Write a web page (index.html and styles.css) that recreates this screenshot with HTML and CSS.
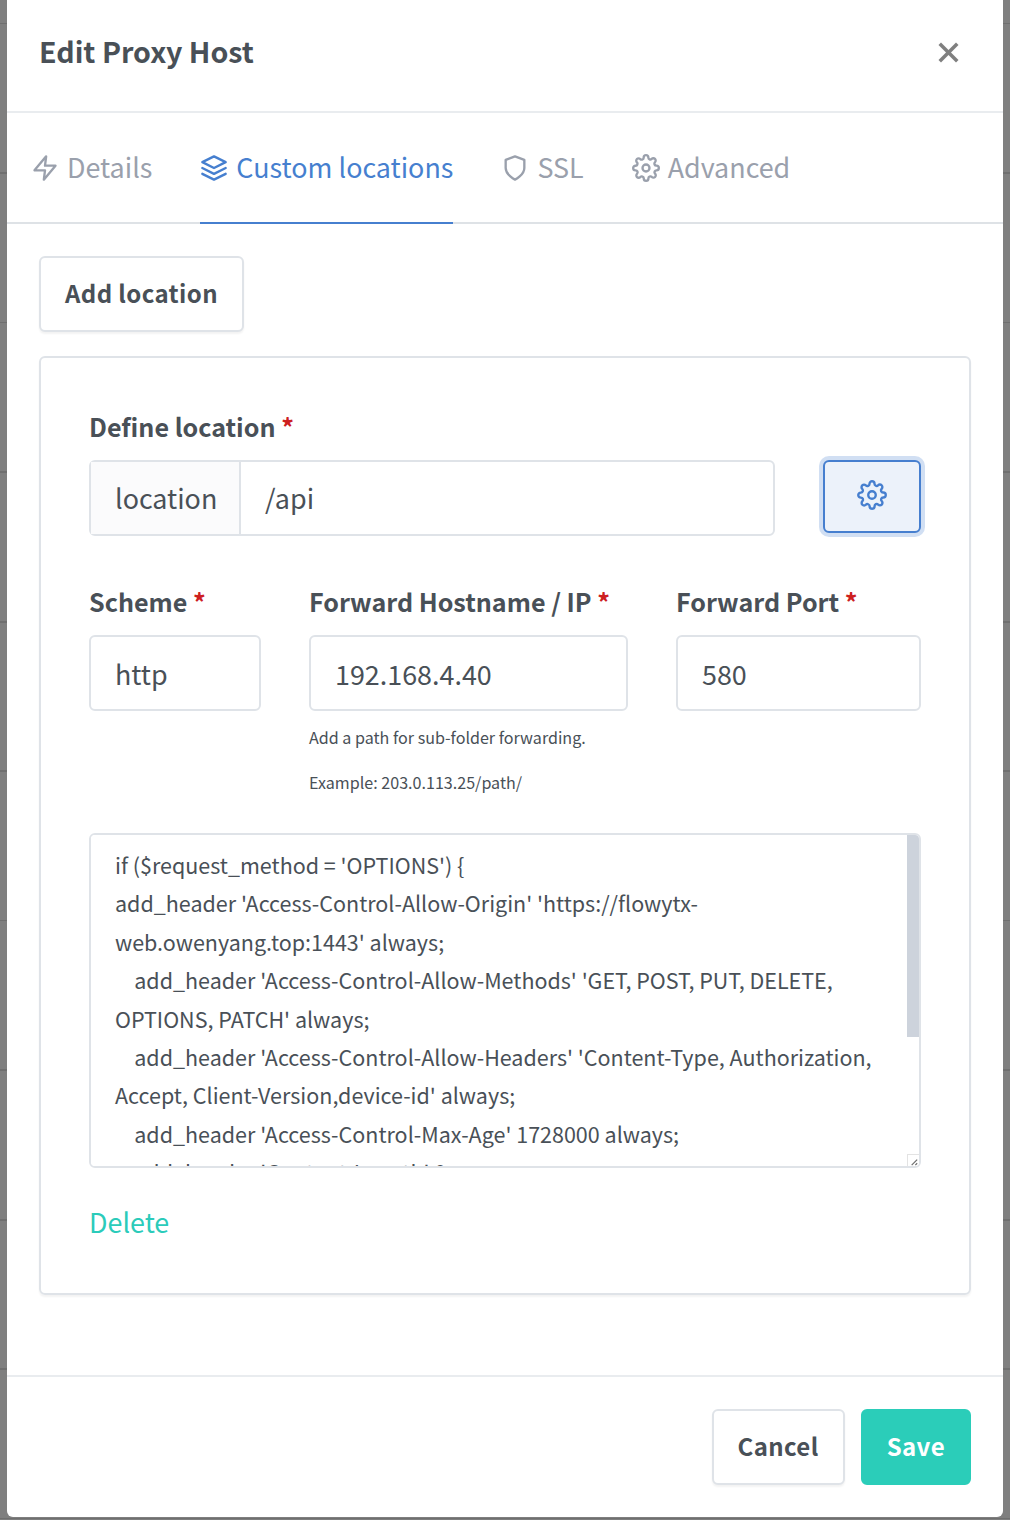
FILE: index.html
```html
<!DOCTYPE html>
<html lang="en">
<head>
    <meta charset="UTF-8">
    <title>Edit Proxy Host</title>
    <link rel="stylesheet" href="styles.css">
</head>
<body>
    <div class="modal">
        <div class="modal-header">
            <h1>Edit Proxy Host</h1>
            <svg class="close" viewBox="0 0 24 24"><line x1="18" y1="6" x2="6" y2="18"/><line x1="6" y1="6" x2="18" y2="18"/></svg>
        </div>

        <div class="tabs">
            <a class="tab">
                <svg class="icon" viewBox="0 0 24 24"><polygon points="13 2 3 14 12 14 11 22 21 10 12 10 13 2"/></svg>
                <span>Details</span>
            </a>
            <a class="tab active">
                <svg class="icon" viewBox="0 0 24 24"><polygon points="12 2 2 7 12 12 22 7 12 2"/><polyline points="2 17 12 22 22 17"/><polyline points="2 12 12 17 22 12"/></svg>
                <span>Custom locations</span>
            </a>
            <a class="tab">
                <svg class="icon" viewBox="0 0 24 24"><path d="M12 22s8-4 8-10V5l-8-3-8 3v7c0 6 8 10 8 10z"/></svg>
                <span>SSL</span>
            </a>
            <a class="tab">
                <svg class="icon" viewBox="0 0 24 24"><circle cx="12" cy="12" r="3"/><path d="M19.4 15a1.65 1.65 0 0 0 .33 1.82l.06.06a2 2 0 0 1 0 2.83 2 2 0 0 1-2.83 0l-.06-.06a1.65 1.65 0 0 0-1.82-.33 1.65 1.65 0 0 0-1 1.51V21a2 2 0 0 1-2 2 2 2 0 0 1-2-2v-.09A1.65 1.65 0 0 0 9 19.4a1.65 1.65 0 0 0-1.82.33l-.06.06a2 2 0 0 1-2.83 0 2 2 0 0 1 0-2.83l.06-.06a1.65 1.65 0 0 0 .33-1.82 1.65 1.65 0 0 0-1.51-1H3a2 2 0 0 1-2-2 2 2 0 0 1 2-2h.09A1.65 1.65 0 0 0 4.6 9a1.65 1.65 0 0 0-.33-1.82l-.06-.06a2 2 0 0 1 0-2.83 2 2 0 0 1 2.83 0l.06.06a1.65 1.65 0 0 0 1.82.33H9a1.65 1.65 0 0 0 1-1.51V3a2 2 0 0 1 2-2 2 2 0 0 1 2 2v.09a1.65 1.65 0 0 0 1 1.51 1.65 1.65 0 0 0 1.82-.33l.06-.06a2 2 0 0 1 2.83 0 2 2 0 0 1 0 2.83l-.06.06a1.65 1.65 0 0 0-.33 1.82V9a1.65 1.65 0 0 0 1.51 1H21a2 2 0 0 1 2 2 2 2 0 0 1-2 2h-.09a1.65 1.65 0 0 0-1.51 1z"/></svg>
                <span>Advanced</span>
            </a>
        </div>

        <div class="modal-body">
            <button class="btn add-btn">Add location</button>

            <div class="card">
                <div class="location-row">
                    <div class="location-field">
                        <label class="form-label">Define location <span class="required">*</span></label>
                        <div class="input-group">
                            <span class="input-prefix">location</span>
                            <span class="input-value">/api</span>
                        </div>
                    </div>
                    <button class="gear-btn">
                        <svg class="icon" viewBox="0 0 24 24"><circle cx="12" cy="12" r="3"/><path d="M19.4 15a1.65 1.65 0 0 0 .33 1.82l.06.06a2 2 0 0 1 0 2.83 2 2 0 0 1-2.83 0l-.06-.06a1.65 1.65 0 0 0-1.82-.33 1.65 1.65 0 0 0-1 1.51V21a2 2 0 0 1-2 2 2 2 0 0 1-2-2v-.09A1.65 1.65 0 0 0 9 19.4a1.65 1.65 0 0 0-1.82.33l-.06.06a2 2 0 0 1-2.83 0 2 2 0 0 1 0-2.83l.06-.06a1.65 1.65 0 0 0 .33-1.82 1.65 1.65 0 0 0-1.51-1H3a2 2 0 0 1-2-2 2 2 0 0 1 2-2h.09A1.65 1.65 0 0 0 4.6 9a1.65 1.65 0 0 0-.33-1.82l-.06-.06a2 2 0 0 1 0-2.83 2 2 0 0 1 2.83 0l.06.06a1.65 1.65 0 0 0 1.82.33H9a1.65 1.65 0 0 0 1-1.51V3a2 2 0 0 1 2-2 2 2 0 0 1 2 2v.09a1.65 1.65 0 0 0 1 1.51 1.65 1.65 0 0 0 1.82-.33l.06-.06a2 2 0 0 1 2.83 0 2 2 0 0 1 0 2.83l-.06.06a1.65 1.65 0 0 0-.33 1.82V9a1.65 1.65 0 0 0 1.51 1H21a2 2 0 0 1 2 2 2 2 0 0 1-2 2h-.09a1.65 1.65 0 0 0-1.51 1z"/></svg>
                    </button>
                </div>

                <div class="forward-row">
                    <div class="field">
                        <label class="form-label">Scheme <span class="required">*</span></label>
                        <div class="input">http</div>
                    </div>
                    <div class="field">
                        <label class="form-label">Forward Hostname / IP <span class="required">*</span></label>
                        <div class="input">192.168.4.40</div>
                        <p class="hint first">Add a path for sub-folder forwarding.</p>
                        <p class="hint">Example: 203.0.113.25/path/</p>
                    </div>
                    <div class="field">
                        <label class="form-label">Forward Port <span class="required">*</span></label>
                        <div class="input">580</div>
                    </div>
                </div>

                <div class="config-wrap">
                    <textarea class="config" spellcheck="false">if ($request_method = 'OPTIONS') {
add_header 'Access-Control-Allow-Origin' 'https://flowytx-web.owenyang.top:1443' always;
    add_header 'Access-Control-Allow-Methods' 'GET, POST, PUT, DELETE, OPTIONS, PATCH' always;
    add_header 'Access-Control-Allow-Headers' 'Content-Type, Authorization, Accept, Client-Version,device-id' always;
    add_header 'Access-Control-Max-Age' 1728000 always;
    add_header 'Content-Length' 0;</textarea>
                    <div class="scroll-thumb"></div>
                    <div class="resize-corner">
                        <svg viewBox="0 0 12 12"><path d="M4 11 L10 5 M8 11 L10 9"/></svg>
                    </div>
                </div>

                <a class="delete">Delete</a>
            </div>
        </div>

        <div class="modal-footer">
            <button class="btn">Cancel</button>
            <button class="btn save">Save</button>
        </div>
    </div>
</body>
</html>
```

FILE: styles.css
```css
* {
    margin: 0;
    padding: 0;
    box-sizing: border-box;
}

html, body {
    height: 1520px;
    overflow: hidden;
}

body {
    font-family: "Noto Sans CJK SC", "Noto Sans", sans-serif;
    color: #495057;
    background-color: #7f7f7f;
    background-image: repeating-linear-gradient(to bottom, #7f7f7f 0, #7f7f7f 23px, #6f6f6f 23px, #6f6f6f 24.5px, #7f7f7f 24.5px, #7f7f7f 149.5px);
}

.modal {
    width: 996px;
    height: 1517px;
    margin-left: 7px;
    background-color: #fff;
    border-radius: 0 0 6px 6px;
}

.modal-header {
    height: 113px;
    padding: 0 37px 6px 32px;
    display: flex;
    justify-content: space-between;
    align-items: center;
    border-bottom: 2px solid #e9ecef;
}

h1 {
    font-size: 28.6px;
    font-weight: 600;
    line-height: 1;
    margin-bottom: 2px;
    color: #495057;
}

.close {
    width: 35px;
    height: 35px;
    fill: none;
    stroke: #7f7f7f;
    stroke-width: 2.4;
}

.tabs {
    height: 111px;
    display: flex;
    gap: 48px;
    padding-left: 24px;
    border-bottom: 2px solid #dee2e6;
}

.tab {
    display: flex;
    align-items: center;
    gap: 8px;
    height: 111px;
    font-size: 26.9px;
    color: #9aa0ac;
    border-bottom: 2px solid transparent;
}

.tab span {
    margin-bottom: 2px;
}

.tab.active {
    color: #467fcf;
    border-bottom-color: #467fcf;
}

.icon {
    width: 28px;
    height: 28px;
    fill: none;
    stroke: currentColor;
    stroke-width: 2;
    stroke-linecap: round;
    stroke-linejoin: round;
}

.modal-body {
    padding: 32px 32px 0;
    height: 1151px;
}

.btn {
    height: 76px;
    padding: 0 24px 4px;
    font-family: inherit;
    font-size: 24px;
    font-weight: 600;
    letter-spacing: 0.4px;
    color: #495057;
    background-color: #fff;
    border: 2px solid #dfe3e8;
    border-radius: 6px;
    box-shadow: 0 2px 2px rgba(0, 0, 0, 0.05);
}

.card {
    height: 939px;
    margin-top: 24px;
    padding: 50px 48px 0;
    border: 2px solid #dfe3e8;
    border-radius: 6px;
    box-shadow: 0 2px 2px rgba(0, 0, 0, 0.05);
}

.form-label {
    display: block;
    height: 52px;
    font-size: 25.1px;
    font-weight: 600;
    line-height: 37px;
}

.required {
    color: #cd201f;
}

.location-row {
    display: flex;
    align-items: flex-end;
    justify-content: space-between;
    padding-bottom: 47px;
}

.location-field {
    width: 686px;
}

.input-group {
    display: flex;
    height: 76px;
    font-size: 26.9px;
    border: 2px solid #dfe3e8;
    border-radius: 6px;
}

.input-prefix {
    width: 150px;
    padding-left: 24px;
    line-height: 72px;
    background-color: #fbfbfc;
    border-right: 2px solid #dfe3e8;
}

.input-value {
    padding-left: 24px;
    line-height: 72px;
}

.gear-btn {
    width: 98px;
    height: 73px;
    margin-bottom: 3px;
    padding-bottom: 4px;
    color: #467fcf;
    background-color: #ecf2fa;
    border: 2px solid #467fcf;
    border-radius: 6px;
    box-shadow: 0 0 0 4px rgba(70, 127, 207, 0.25);
    display: flex;
    align-items: center;
    justify-content: center;
}

.gear-btn .icon {
    width: 30px;
    height: 30px;
    stroke-width: 1.9;
}

.forward-row {
    display: grid;
    grid-template-columns: 172px 319px 245px;
    gap: 48px;
    height: 250px;
}

.input {
    height: 76px;
    padding-left: 24px;
    font-size: 26.9px;
    line-height: 73px;
    border: 2px solid #dfe3e8;
    border-radius: 6px;
}

.hint {
    font-size: 16.1px;
    line-height: 26px;
    margin-top: 19px;
}

.hint.first {
    margin-top: 13px;
}

.config-wrap {
    position: relative;
    height: 335px;
    border: 2px solid #dfe3e8;
    border-radius: 6px;
    overflow: hidden;
}

.config {
    display: block;
    width: 100%;
    height: 100%;
    padding: 11px 24px;
    font-family: inherit;
    font-size: 21.5px;
    line-height: 38.4px;
    color: #495057;
    border: none;
    outline: none;
    resize: none;
    overflow: hidden;
}

.scroll-thumb {
    position: absolute;
    top: 0;
    right: 0;
    width: 12px;
    height: 202px;
    background-color: #cdd3dc;
}

.resize-corner {
    position: absolute;
    right: 0;
    bottom: 0;
    width: 12px;
    height: 12px;
    background-color: #fff;
    border-left: 1px solid #e3e3e3;
    border-top: 1px solid #e3e3e3;
}

.resize-corner svg {
    display: block;
    width: 11px;
    height: 11px;
    fill: none;
    stroke: #6d6d6d;
    stroke-width: 1.3;
}

.delete {
    display: block;
    margin-top: 34px;
    font-size: 26.9px;
    line-height: 40px;
    color: #2bcbba;
}

.modal-footer {
    height: 141px;
    padding: 32px;
    display: flex;
    justify-content: flex-end;
    gap: 16px;
    border-top: 2px solid #e9ecef;
}

.save {
    color: #fff;
    background-color: #2bcdb9;
    border-color: #2bcdb9;
    box-shadow: none;
}
```
